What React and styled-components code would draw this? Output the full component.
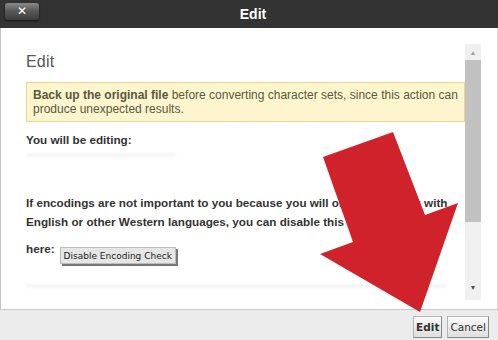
import React from "react";
import styled, { createGlobalStyle } from "styled-components";

const GlobalStyle = createGlobalStyle`
  html, body {
    margin: 0;
    padding: 0;
    background: #fff;
    font-family: "Liberation Sans", Arial, sans-serif;
  }
`;

const Dialog = styled.div`
  position: relative;
  width: 498px;
  height: 340px;
  display: flex;
  flex-direction: column;
  overflow: hidden;
`;

const TitleBar = styled.div`
  height: 28px;
  background: #333;
  display: flex;
  align-items: center;
  justify-content: center;
  position: relative;
`;

const Title = styled.div`
  color: #fff;
  font-weight: bold;
  font-size: 14px;
  margin-left: 8px;
`;

const CloseButton = styled.button`
  position: absolute;
  left: 5px;
  top: 3px;
  width: 34px;
  height: 17px;
  border: none;
  border-radius: 3px;
  background: linear-gradient(#8a8a8a, #5a5a5a 45%, #3c3c3c);
  box-shadow: 0 1px 2px #111;
  color: #fff;
  font-weight: bold;
  font-size: 12px;
  line-height: 17px;
  padding: 0;
  font-family: "DejaVu Sans", sans-serif;
`;

const Body = styled.div`
  flex: 1;
  background: #fff;
  border-left: 1px solid #c4c4c4;
  border-right: 1px solid #d8d8d8;
  display: flex;
  padding: 16px 16px 9px 25px;
  min-height: 0;
`;

const Content = styled.div`
  flex: 1;
  overflow: hidden;
  color: #333;
`;

const Heading = styled.h2`
  margin: 9px 0 11px;
  font-weight: normal;
  font-size: 16px;
  color: #555;
  letter-spacing: 0.2px;
`;

const Warning = styled.div`
  background: #fcf5cd;
  border: 1px solid #e6d78f;
  padding: 5px 6px;
  font-size: 12px;
  line-height: 14px;
  color: #5b5940;
`;

const Strong = styled.b`
  font-weight: bold;
`;

const Para = styled.p`
  margin: ${(p) => p.$mt || 0}px 0 0;
  font-size: 11.7px;
  font-weight: bold;
  line-height: 19px;
  color: #333;
`;

const Blur = styled.div`
  margin-top: ${(p) => p.$mt || 0}px;
  width: ${(p) => p.$w}px;
  height: 4px;
  background: #f6f6f6;
  filter: blur(1px);
`;

const SmallButton = styled.button`
  font-family: "DejaVu Sans", sans-serif;
  font-size: 9px;
  color: #222;
  background: #e6e6e6;
  border: 1px solid #bcbcbc;
  box-shadow: 2px 2px 0 #777;
  padding: 3px 3px 2px;
  margin-left: 5px;
  vertical-align: -6px;
`;

const Scrollbar = styled.div`
  width: 16px;
  background: #f0f0f0;
  display: flex;
  flex-direction: column;
  align-items: center;
`;

const ScrollArrow = styled.div`
  height: 16px;
  margin-bottom: ${(p) => p.$mb || 0}px;
  display: flex;
  align-items: center;
  justify-content: center;
  color: ${(p) => (p.$dark ? "#505050" : "#a3a3a3")};
  font-size: 7px;
`;

const Thumb = styled.div`
  width: 16px;
  height: 162px;
  background: #c1c1c1;
`;

const Spacer = styled.div`
  flex: 1;
`;

const Footer = styled.div`
  height: 31px;
  background: #ececec;
  border-top: 1px solid #c8c8c8;
  display: flex;
  justify-content: flex-end;
  align-items: flex-start;
  gap: 5px;
  padding: 6px 9px 0 0;
  box-sizing: border-box;
`;

const FooterButton = styled.button`
  height: 22px;
  font-family: "DejaVu Sans", sans-serif;
  font-size: 10.5px;
  font-weight: ${(p) => (p.$primary ? "bold" : "normal")};
  color: #333;
  background: linear-gradient(#fafafa, #dedede);
  border: 1px solid #b5b5b5;
  border-right-color: #888;
  border-bottom-color: #888;
  padding: 0 2px;
`;

const Arrow = styled.svg`
  position: absolute;
  left: 0;
  top: 0;
  pointer-events: none;
`;

export default function App() {
  return (
    <>
      <GlobalStyle />
      <Dialog>
        <TitleBar>
          <CloseButton>✕</CloseButton>
          <Title>Edit</Title>
        </TitleBar>
        <Body>
          <Content>
            <Heading>Edit</Heading>
            <Warning>
              <Strong>Back up the original file</Strong> before converting character sets, since this action can produce unexpected results.
            </Warning>
            <Para $mt={8}>You will be editing:</Para>
            <Blur $mt={4} $w={150} />
            <Para $mt={36}>
              If encodings are not important to you because you will only be working with English or other Western languages, you can disable this check by clicking
            </Para>
            <Para $mt={8}>
              here:
              <SmallButton>Disable Encoding Check</SmallButton>
            </Para>
            <Blur $mt={20} $w={420} />
          </Content>
          <Scrollbar>
            <ScrollArrow>▲</ScrollArrow>
            <Thumb />
            <Spacer />
            <ScrollArrow $dark $mb={5}>▼</ScrollArrow>
          </Scrollbar>
        </Body>
        <Footer>
          <FooterButton $primary>Edit</FooterButton>
          <FooterButton>Cancel</FooterButton>
        </Footer>
        <Arrow width="498" height="340" viewBox="0 0 498 340">
          <polygon
            points="323,157 393,132 425,215 458,203 420,312 320,254 353,242"
            fill="#d0222b"
          />
        </Arrow>
      </Dialog>
    </>
  );
}
